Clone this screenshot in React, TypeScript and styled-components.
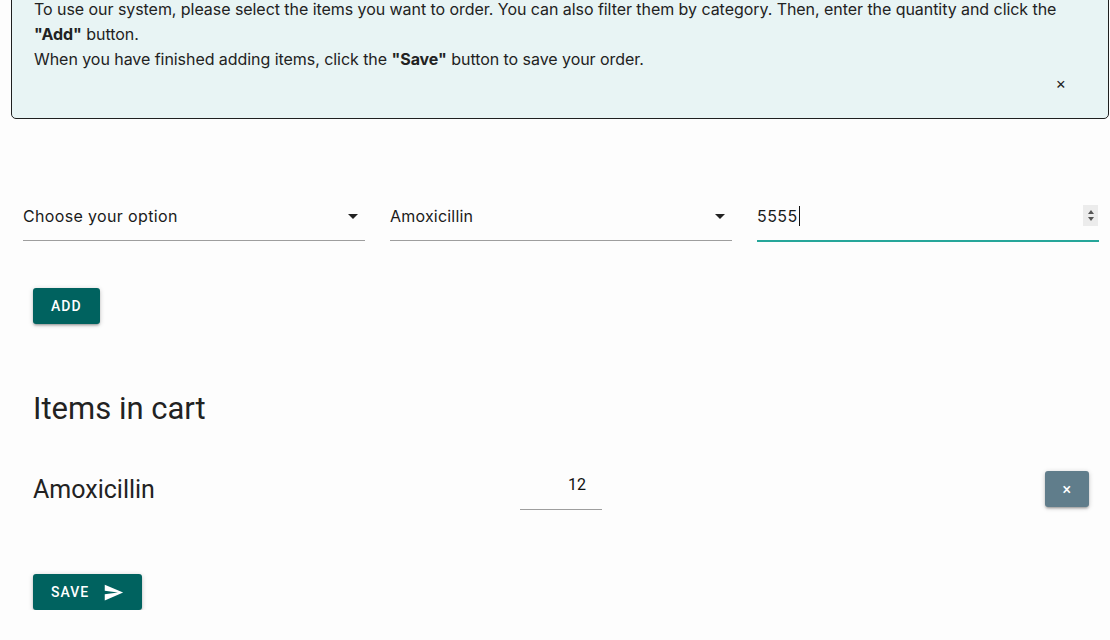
import React from "react";
import styled, { createGlobalStyle } from "styled-components";

const GlobalStyle = createGlobalStyle`
  html, body { margin: 0; padding: 0; }
  body {
    background: #fdfdfd;
    font-family: Roboto, "Liberation Sans", sans-serif;
    color: rgba(0,0,0,0.87);
    overflow: hidden;
  }
`;

const Page = styled.div`
  display: flex;
  flex-direction: column;
`;

const Alert = styled.div`
  position: relative;
  margin: -20px 1px 0 11px;
  padding: 16px 22px 46px;
  background: #e8f4f4;
  border: 1px solid #1f1f1f;
  border-radius: 5px;
  font-family: Inter, "Liberation Sans", sans-serif;
  font-size: 16px;
  line-height: 25px;
  letter-spacing: -0.055px;
  color: #222;
`;

const Line = styled.div`
  white-space: nowrap;
  b { font-weight: 700; }
`;

const Close = styled.button`
  position: absolute;
  right: 42px;
  bottom: 27px;
  border: 0;
  background: transparent;
  font-family: Inter, "Liberation Sans", sans-serif;
  font-size: 16px;
  color: #222;
  padding: 0;
  line-height: 16px;
  cursor: pointer;
`;

const FormRow = styled.div`
  display: grid;
  grid-template-columns: repeat(3, 342px);
  column-gap: 25px;
  margin: 74px 0 0 23px;
`;

const Field = styled.div<{ $focused?: boolean; $spacing?: number }>`
  height: 48px;
  box-sizing: border-box;
  display: flex;
  align-items: center;
  justify-content: space-between;
  padding-bottom: 2px;
  border-bottom: 1px solid ${(p) => (p.$focused ? "#26a69a" : "#9e9e9e")};
  box-shadow: ${(p) => (p.$focused ? "0 1px 0 0 #26a69a" : "none")};
  font-family: Inter, "Liberation Sans", sans-serif;
  font-size: 16px;
  letter-spacing: ${(p) => p.$spacing ?? 0.35}px;
  color: #1a1a1a;
`;

const Value = styled.span`
  display: inline-flex;
  align-items: center;
`;

const Caret = styled.span`
  display: inline-block;
  width: 1px;
  height: 20px;
  background: #111;
  margin-left: 1px;
`;

const Spinner = styled.div`
  width: 15px;
  height: 21px;
  background: #ececec;
  display: flex;
  flex-direction: column;
  align-items: center;
  justify-content: center;
  gap: 3px;
  margin-right: 1px;
`;

const Tri = styled.span<{ $down?: boolean }>`
  width: 0;
  height: 0;
  border-left: 3.5px solid transparent;
  border-right: 3.5px solid transparent;
  ${(p) => (p.$down ? "border-top: 4px solid #555;" : "border-bottom: 4px solid #555;")}
`;

const Btn = styled.button<{ $grey?: boolean }>`
  display: inline-flex;
  align-items: center;
  justify-content: center;
  gap: 14px;
  height: 36px;
  padding: 0 ${(p) => (p.$grey ? 17 : 18)}px;
  border: 0;
  border-radius: 3px;
  background: ${(p) => (p.$grey ? "#607d8b" : "#00625f")};
  color: #fff;
  font-family: Roboto, sans-serif;
  font-weight: 500;
  font-size: ${(p) => (p.$grey ? 16 : 14)}px;
  letter-spacing: 1px;
  text-transform: uppercase;
  box-shadow: 0 2px 2px 0 rgba(0,0,0,0.14), 0 3px 1px -2px rgba(0,0,0,0.12), 0 1px 5px 0 rgba(0,0,0,0.2);
  cursor: pointer;
`;

const AddWrap = styled.div`
  margin: 47px 0 0 33px;
`;

const Cart = styled.section`
  margin: 0 21px 0 33px;
`;

const Heading = styled.h4`
  margin: 65px 0 0;
  font-family: Roboto, sans-serif;
  font-weight: 400;
  font-size: 31px;
  line-height: 40px;
  color: #222;
`;

const CartRow = styled.div`
  display: grid;
  grid-template-columns: 1fr 82px 1fr;
  align-items: center;
  margin-top: 33px;
`;

const ItemName = styled.div`
  font-family: Roboto, sans-serif;
  font-size: 25px;
  color: #222;
  padding-top: 6px;
`;

const Qty = styled.div`
  height: 48px;
  box-sizing: border-box;
  border-bottom: 1px solid #9e9e9e;
  display: flex;
  align-items: center;
  justify-content: flex-end;
  padding: 0 16px 2px 0;
  font-family: Roboto, sans-serif;
  font-size: 16px;
  color: #111;
`;

const DelWrap = styled.div`
  justify-self: end;
  padding-top: 6px;
`;

const SaveWrap = styled.div`
  margin: 64px 0 0 33px;
`;

const Arrow = () => (
  <svg width="24" height="24" viewBox="0 0 24 24">
    <path d="M7 10l5 5 5-5z" fill="#222" />
  </svg>
);

const SendIcon = () => (
  <svg width="21" height="21" viewBox="0 0 24 24">
    <path d="M2.01 21L2 14l15-2-15-2 .01-7L23 12 2.01 21z" fill="#fff" />
  </svg>
);

export default function App() {
  return (
    <Page>
      <GlobalStyle />
      <Alert>
        <Line>
          To use our system, please select the items you want to order. You can also filter them by category. Then, enter the quantity and click the
        </Line>
        <Line>
          <b>"Add"</b> button.
        </Line>
        <Line>
          When you have finished adding items, click the <b>"Save"</b> button to save your order.
        </Line>
        <Close aria-label="close">×</Close>
      </Alert>

      <FormRow>
        <Field>
          <span>Choose your option</span>
          <Arrow />
        </Field>
        <Field $spacing={0.2}>
          <span>Amoxicillin</span>
          <Arrow />
        </Field>
        <Field $focused $spacing={0.4}>
          <Value>
            5555
            <Caret />
          </Value>
          <Spinner>
            <Tri />
            <Tri $down />
          </Spinner>
        </Field>
      </FormRow>

      <AddWrap>
        <Btn>Add</Btn>
      </AddWrap>

      <Cart>
        <Heading>Items in cart</Heading>
        <CartRow>
          <ItemName>Amoxicillin</ItemName>
          <Qty>12</Qty>
          <DelWrap>
            <Btn $grey>×</Btn>
          </DelWrap>
        </CartRow>
      </Cart>

      <SaveWrap>
        <Btn>
          Save
          <SendIcon />
        </Btn>
      </SaveWrap>
    </Page>
  );
}
